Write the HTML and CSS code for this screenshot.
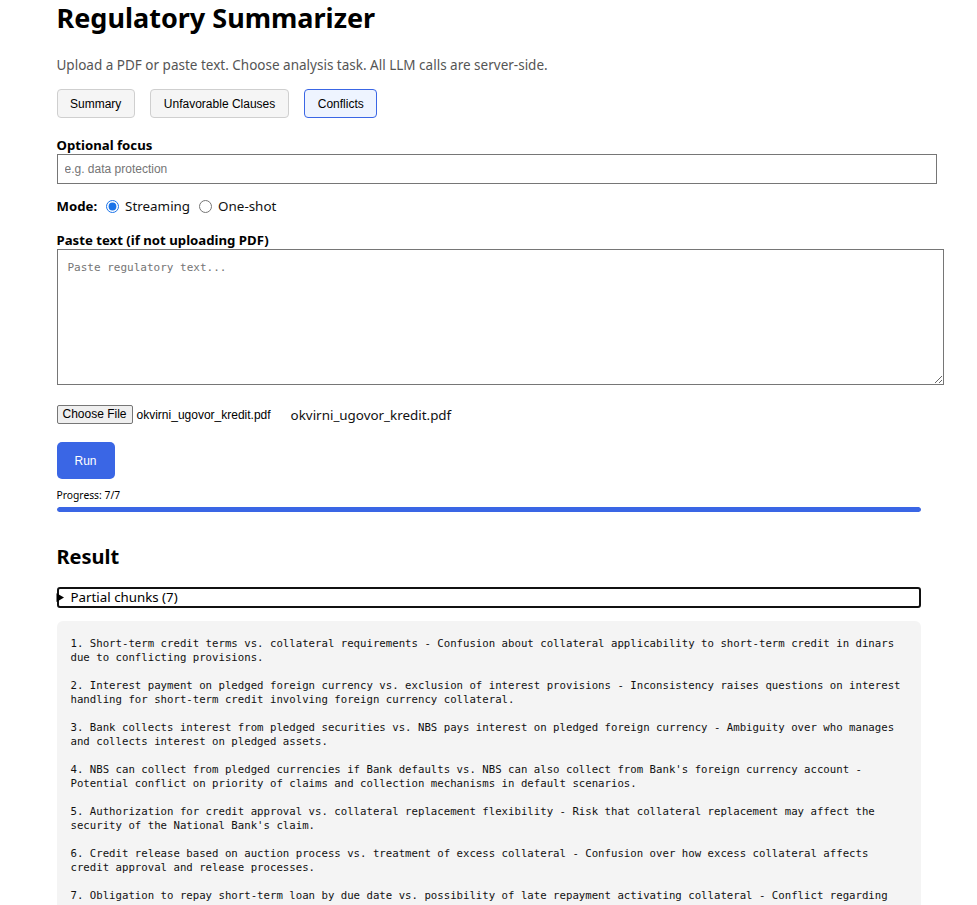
FILE: index.html
```html
<!DOCTYPE html>
<html lang="en">
<head>
<meta charset="utf-8">
<title>Regulatory Summarizer</title>
<link rel="stylesheet" href="styles.css">
</head>
<body>
<div class="page">
  <h1 class="title">Regulatory Summarizer</h1>
  <p class="sub">Upload a PDF or paste text. Choose analysis task. All LLM calls are server-side.</p>
  <div class="tasks">
    <button class="task">Summary</button>
    <button class="task">Unfavorable Clauses</button>
    <button class="task active">Conflicts</button>
  </div>
  <label class="label">Optional focus</label>
  <input class="focus" type="text" placeholder="e.g. data protection">
  <div class="mode">
    <span class="mode-label">Mode:</span>
    <label class="opt"><input type="radio" name="mode" checked> Streaming</label>
    <label class="opt"><input type="radio" name="mode"> One-shot</label>
  </div>
  <label class="label label-paste">Paste text (if not uploading PDF)</label>
  <textarea class="paste" placeholder="Paste regulatory text..."></textarea>
  <div class="file-row">
    <span class="file-btn">Choose File</span>
    <span class="file-name">okvirni_ugovor_kredit.pdf</span>
    <span class="file-echo">okvirni_ugovor_kredit.pdf</span>
  </div>
  <button class="run">Run</button>
  <div class="progress-text">Progress: 7/7</div>
  <div class="bar"><div class="bar-fill" style="width:100%"></div></div>
  <h2 class="result">Result</h2>
  <details class="chunks"><summary>Partial chunks (7)</summary></details>
  <pre class="output">1. Short-term credit terms vs. collateral requirements - Confusion about collateral applicability to short-term credit in dinars
due to conflicting provisions.

2. Interest payment on pledged foreign currency vs. exclusion of interest provisions - Inconsistency raises questions on interest
handling for short-term credit involving foreign currency collateral.

3. Bank collects interest from pledged securities vs. NBS pays interest on pledged foreign currency - Ambiguity over who manages
and collects interest on pledged assets.

4. NBS can collect from pledged currencies if Bank defaults vs. NBS can also collect from Bank's foreign currency account -
Potential conflict on priority of claims and collection mechanisms in default scenarios.

5. Authorization for credit approval vs. collateral replacement flexibility - Risk that collateral replacement may affect the
security of the National Bank's claim.

6. Credit release based on auction process vs. treatment of excess collateral - Confusion over how excess collateral affects
credit approval and release processes.

7. Obligation to repay short-term loan by due date vs. possibility of late repayment activating collateral - Conflict regarding
repayment timing and collateral activation.</pre>
</div>
</body>
</html>
```
FILE: styles.css
```css
html, body {
  margin: 0;
  padding: 0;
  background: #fff;
}
body {
  font-family: "Noto Sans", "Open Sans", sans-serif;
  font-size: 13.4px;
  color: #111;
}
.page {
  width: 864px;
  margin: 0 auto;
}
.title {
  margin: 0;
  font-size: 27px;
  line-height: 36px;
  font-weight: 700;
  color: #000;
}
.sub {
  margin: 19px 0 0;
  line-height: 20px;
  color: #555;
  font-size: 13.5px;
}
.tasks {
  margin-top: 14px;
  display: flex;
  gap: 15.5px;
}
.task {
  height: 29px;
  padding: 0 12.5px;
  border: 1px solid #cfcfcf;
  border-radius: 4px;
  background: #f5f5f5;
  font-family: "Liberation Sans", Arial, sans-serif;
  font-size: 12px;
  color: #000;
}
.task.active {
  background: #eef4ff;
  border-color: #3a66e5;
}
.label {
  display: block;
  margin-top: 18px;
  line-height: 18px;
  font-size: 13.2px;
  font-weight: 700;
  color: #000;
}
.focus {
  display: block;
  width: 864px;
  height: 28px;
  margin: 0;
  padding: 0 7px;
  border: 1px solid #767676;
  border-radius: 0;
  font-family: "Liberation Sans", Arial, sans-serif;
  font-size: 12px;
  outline: none;
}
.focus::placeholder { color: #757575; }
.mode {
  margin-top: 12px;
  height: 20px;
  display: flex;
  align-items: center;
  line-height: 20px;
}
.mode-label {
  font-weight: 700;
  font-size: 13.2px;
  color: #000;
  margin-right: 9px;
}
.opt {
  display: flex;
  align-items: center;
  margin-right: 9px;
}
.opt input {
  width: 13px;
  height: 13px;
  margin: 0 6px 0 0;
  accent-color: #1a73e8;
}
.label-paste {
  margin-top: 15px;
}
.paste {
  display: block;
  width: 865px;
  height: 113px;
  margin: 0;
  padding: 11px 10px 10px;
  border: 1px solid #767676;
  border-radius: 0;
  font-family: "DejaVu Sans Mono", "Liberation Mono", monospace;
  font-size: 11px;
  resize: vertical;
  outline: none;
}
.paste::placeholder { color: #757575; }
.file-row {
  margin-top: 20px;
  height: 19px;
  display: flex;
  align-items: center;
}
.file-btn {
  box-sizing: border-box;
  height: 19px;
  padding: 0 5px;
  border: 1px solid #767676;
  border-radius: 2px;
  background: #efefef;
  font-family: "Liberation Sans", Arial, sans-serif;
  font-size: 12px;
  line-height: 17px;
  color: #000;
}
.file-name {
  margin-left: 4px;
  font-family: "Liberation Sans", Arial, sans-serif;
  font-size: 12px;
  color: #000;
}
.file-echo {
  margin-left: 20px;
  font-size: 13.4px;
  color: #111;
}
.run {
  display: block;
  margin-top: 18px;
  width: 58px;
  height: 37px;
  border: none;
  border-radius: 5px;
  background: #3a66e5;
  color: #fff;
  font-family: "Liberation Sans", Arial, sans-serif;
  font-size: 12px;
}
.progress-text {
  margin-top: 9px;
  line-height: 14px;
  font-size: 10.3px;
  color: #000;
}
.bar {
  margin-top: 5px;
  height: 5px;
  border-radius: 3px;
  background: #e5e5e5;
  overflow: hidden;
}
.bar-fill {
  height: 100%;
  background: #3a66e5;
  border-radius: 3px;
}
.result {
  margin: 31px 0 0;
  font-size: 20px;
  line-height: 28px;
  font-weight: 700;
  color: #000;
}
.chunks {
  margin-top: 16px;
  box-sizing: border-box;
  height: 21px;
  border: 2px solid #111;
  border-radius: 3px;
}
.chunks summary {
  line-height: 17px;
  margin-left: -2px;
  font-size: 13.3px;
  color: #000;
  cursor: pointer;
}
.output {
  margin: 13px 0 0;
  padding: 16px 14px 14px;
  background: #f4f4f4;
  border-radius: 6px;
  font-family: "DejaVu Sans Mono", "Liberation Mono", monospace;
  font-size: 10.7px;
  line-height: 14px;
  white-space: pre-wrap;
  color: #111;
}
```
